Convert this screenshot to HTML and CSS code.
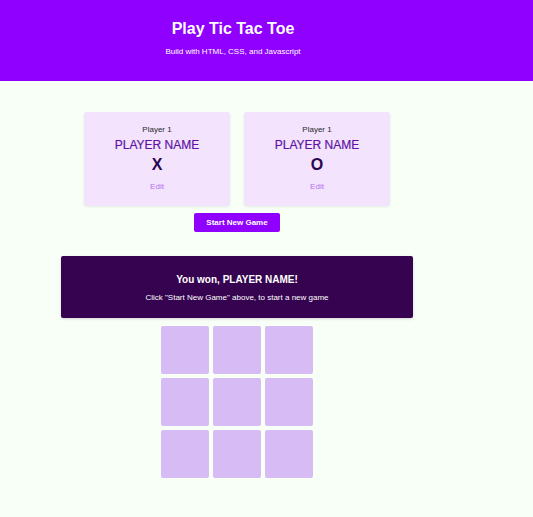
FILE: index.html
```html
<!DOCTYPE html>
<html lang="en">
<head>
<meta charset="utf-8">
<title>Play Tic Tac Toe</title>
<link rel="stylesheet" href="styles.css">
</head>
<body>
<header class="site-header">
  <div class="header-inner">
    <h1 class="title">Play Tic Tac Toe</h1>
    <p class="subtitle">Build with HTML, CSS, and Javascript</p>
  </div>
</header>
<main class="main">
  <section class="players">
    <article class="player-card">
      <h2 class="player-label">Player 1</h2>
      <h3 class="player-name">PLAYER NAME</h3>
      <p class="player-symbol">X</p>
      <button class="edit-btn">Edit</button>
    </article>
    <article class="player-card">
      <h2 class="player-label">Player 1</h2>
      <h3 class="player-name">PLAYER NAME</h3>
      <p class="player-symbol">O</p>
      <button class="edit-btn">Edit</button>
    </article>
  </section>
  <button class="start-btn">Start New Game</button>
  <section class="game-over">
    <h2 class="won">You won, PLAYER NAME!</h2>
    <p class="won-hint">Click "Start New Game" above, to start a new game</p>
  </section>
  <ol class="board">
    <li class="cell"></li><li class="cell"></li><li class="cell"></li>
    <li class="cell"></li><li class="cell"></li><li class="cell"></li>
    <li class="cell"></li><li class="cell"></li><li class="cell"></li>
  </ol>
</main>
</body>
</html>
```
FILE: styles.css
```css
* { box-sizing: border-box; }
html, body {
  margin: 0;
  padding: 0;
  background: #f7fff7;
  font-family: "Liberation Sans", Arial, sans-serif;
}
.site-header {
  background: #8f00ff;
  height: 81px;
  color: #fff;
}
.header-inner {
  width: 466px;
  text-align: center;
  padding-top: 19px;
}
.title {
  margin: 0;
  font-size: 16px;
  font-weight: bold;
  line-height: 20px;
}
.subtitle {
  margin: 8px 0 0;
  font-size: 8px;
  line-height: 10px;
}
.main {
  width: 474px;
  display: flex;
  flex-direction: column;
  align-items: center;
  padding-top: 31px;
}
.players {
  display: flex;
  gap: 14px;
}
.player-card {
  width: 146px;
  height: 94px;
  background: #f3e3fc;
  border-radius: 3px;
  box-shadow: 0 1px 3px rgba(0,0,0,0.08);
  text-align: center;
  padding-top: 13px;
}
.player-label {
  margin: 0;
  font-size: 8px;
  font-weight: normal;
  line-height: 10px;
  color: #2a2a2a;
}
.player-name {
  margin: 3px 0 0;
  font-size: 12px;
  font-weight: normal;
  line-height: 14px;
  color: #5e12a8;
  -webkit-text-stroke: 0.2px #5e12a8;
}
.player-symbol {
  margin: 3px 0 0;
  font-size: 16px;
  font-weight: bold;
  line-height: 20px;
  color: #280650;
}
.edit-btn {
  margin-top: 6px;
  border: none;
  background: none;
  font-family: inherit;
  font-size: 8px;
  line-height: 10px;
  color: #b36ef2;
  padding: 0;
}
.start-btn {
  margin-top: 7px;
  width: 86px;
  height: 19px;
  border: none;
  border-radius: 2px;
  background: #8f00ff;
  color: #fff;
  font-family: inherit;
  font-size: 8px;
  font-weight: bold;
  padding: 0;
}
.game-over {
  margin-top: 24px;
  width: 352px;
  height: 62px;
  background: #35034f;
  border-radius: 2px;
  box-shadow: 0 1px 3px rgba(0,0,0,0.15);
  color: #fff;
  text-align: center;
  padding-top: 18px;
}
.won {
  margin: 0;
  font-size: 10px;
  font-weight: bold;
  line-height: 12px;
}
.won-hint {
  margin: 7px 0 0;
  font-size: 8px;
  line-height: 10px;
}
.board {
  list-style: none;
  margin: 8px 0 0;
  padding: 0;
  display: grid;
  grid-template-columns: repeat(3, 48px);
  grid-auto-rows: 48px;
  gap: 4px;
}
.cell {
  background: #d7bbf5;
  border-radius: 2px;
}
```
